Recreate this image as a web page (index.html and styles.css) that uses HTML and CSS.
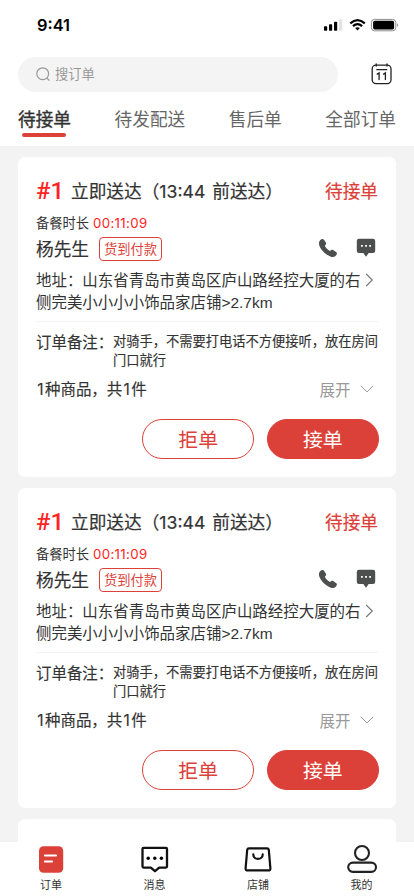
FILE: index.html
```html
<!DOCTYPE html>
<html lang="zh-CN">
<head>
<meta charset="utf-8">
<meta name="viewport" content="width=device-width, initial-scale=1">
<title>订单</title>
<link rel="stylesheet" href="styles.css">
</head>
<body>
<svg class="sprite" width="0" height="0" aria-hidden="true">
  <symbol id="phone" viewBox="0 0 20 20"><path d="M2.1 2.2 C3.2 .9 4.8 .5 5.8 1.5 L8 4.8 C8.5 5.8 7.9 6.6 6.8 7.8 C7.7 9.8 9.9 12 12 13.1 C13.3 11.8 14.1 11.4 15.1 12 L18.4 14.3 C19.4 15.3 18.8 16.8 17.5 18 C16.2 19.2 14.2 19.1 12.3 18.4 C7.4 16.5 3.1 12.2 1.3 7.5 C.6 5.4 .9 3.6 2.1 2.2Z" fill="#4d4f4f"/></symbol>
  <symbol id="chat" viewBox="0 0 20 20"><path d="M3 .8H17Q19.2 .8 19.2 3V12.8Q19.2 15 17 15H12.7L10 18.8L7.3 15H3Q.8 15 .8 12.8V3Q.8 .8 3 .8Z" fill="#4d4f4f"/><path d="M5 7h1.8v1.8H5zM9.1 7h1.8v1.8H9.1zM13.2 7H15v1.8h-1.8z" fill="#fff"/></symbol>
</svg>
<div class="screen">
  <header class="top">
    <div class="status">
      <span class="clock">9:41</span>
      <svg class="signals" width="76" height="14" viewBox="0 0 76 14">
        <g><rect x="0" y="8.2" width="3.2" height="4.6" rx=".8"/><rect x="5" y="6.2" width="3.2" height="6.6" rx=".8"/><rect x="10" y="3.8" width="3.2" height="9" rx=".8"/><rect x="15" y="1.6" width="3.2" height="11.2" rx=".8" fill="#e2e2e2"/></g>
        <g fill="none" stroke="#000" stroke-width="2.3"><path d="M26.3 5.4Q33.5 -1.2 40.8 5.4"/><path d="M29 8.2Q33.5 4.1 38.1 8.2"/></g><path d="M31.2 10.1Q33.5 8.3 35.9 10.1L33.5 12.5Z"/>
        <rect x="47.4" y="1.4" width="24.4" height="11.4" rx="3.2" fill="none" stroke="#8c8c8c"/><rect x="49.1" y="2.8" width="21" height="8.6" rx="1.6"/><path d="M73 5.2Q75.4 7.1 73 9Z" fill="#999"/>
      </svg>
    </div>
    <div class="searchbar">
      <div class="search">
        <svg width="15" height="15" viewBox="0 0 15 15" fill="none" stroke="#999" stroke-width="1.2"><circle cx="6.7" cy="6.7" r="5.9"/><path d="M10.9 11L13.4 13.6"/></svg>
        <span>搜订单</span>
      </div>
      <svg class="calendar" width="22" height="22" viewBox="0 0 22 22" fill="none" stroke="#222" stroke-width="1.3" stroke-linecap="round"><rect x="1.2" y="2.2" width="18.8" height="18.4" rx="3.8"/><path d="M5.2 1V3M16 1V3M5.8 6.6H15.8M6.2 11.1L8.1 10V16.6M12.5 11.1L14.4 10V16.6"/></svg>
    </div>
    <nav class="tabs">
      <span class="tab active">待接单</span><span class="tab">待发配送</span><span class="tab">售后单</span><span class="tab">全部订单</span>
    </nav>
  </header>
  <main class="orders">
    <article class="card">
      <div class="title"><b class="num">#1</b><span class="when">立即送达（<i class="time">13:44</i>前送达）</span><span class="state">待接单</span></div>
      <div class="prep">备餐时长<span class="timer">00:11:09</span></div>
      <div class="customer"><span class="name">杨先生</span><span class="tag">货到付款</span><svg class="phone" width="20" height="20"><use href="#phone"/></svg><svg width="20" height="20"><use href="#chat"/></svg></div>
      <div class="address"><p>地址：山东省青岛市黄岛区庐山路经控大厦的右侧完美小小小小饰品家店铺&gt;2.7km</p><svg width="9" height="14" viewBox="0 0 9 14" fill="none" stroke="#777" stroke-width="1.1"><path d="M1.2 1L7.3 7L1.2 13"/></svg></div>
      <div class="remark"><span class="label">订单备注：</span><p>对骑手，不需要打电话不方便接听，放在房间门口就行</p></div>
      <div class="summary"><span class="goods"><i>1</i>种商品，共<i>1</i>件</span><span class="expand">展开<svg width="14" height="8" viewBox="0 0 14 8" fill="none" stroke="#999"><path d="M.8 .8L7 6.9L13.2 .8"/></svg></span></div>
      <div class="actions"><button class="reject">拒单</button><button class="accept">接单</button></div>
    </article>
    <article class="card">
      <div class="title"><b class="num">#1</b><span class="when">立即送达（<i class="time">13:44</i>前送达）</span><span class="state">待接单</span></div>
      <div class="prep">备餐时长<span class="timer">00:11:09</span></div>
      <div class="customer"><span class="name">杨先生</span><span class="tag">货到付款</span><svg class="phone" width="20" height="20"><use href="#phone"/></svg><svg width="20" height="20"><use href="#chat"/></svg></div>
      <div class="address"><p>地址：山东省青岛市黄岛区庐山路经控大厦的右侧完美小小小小饰品家店铺&gt;2.7km</p><svg width="9" height="14" viewBox="0 0 9 14" fill="none" stroke="#777" stroke-width="1.1"><path d="M1.2 1L7.3 7L1.2 13"/></svg></div>
      <div class="remark"><span class="label">订单备注：</span><p>对骑手，不需要打电话不方便接听，放在房间门口就行</p></div>
      <div class="summary"><span class="goods"><i>1</i>种商品，共<i>1</i>件</span><span class="expand">展开<svg width="14" height="8" viewBox="0 0 14 8" fill="none" stroke="#999"><path d="M.8 .8L7 6.9L13.2 .8"/></svg></span></div>
      <div class="actions"><button class="reject">拒单</button><button class="accept">接单</button></div>
    </article>
    <article class="card"></article>
  </main>
  <footer class="navbar">
    <a class="item"><svg width="32" height="32" viewBox="0 0 32 32"><rect x="4" y="5.3" width="24.2" height="26.5" rx="4.5" fill="#dc4139"/><path d="M10 14.5H21M10 20.5H17" stroke="#fff" stroke-width="2.2" stroke-linecap="round"/></svg><span>订单</span></a>
    <a class="item"><svg width="32" height="32" viewBox="0 0 32 32"><path d="M4.5 6.9H27Q28 6.9 28 7.9V25.6Q28 26.6 27 26.6H20.2L16 30.2L11.8 26.6H4.5Q3.5 26.6 3.5 25.6V7.9Q3.5 6.9 4.5 6.9Z" fill="none" stroke="#111" stroke-width="2.3" stroke-linejoin="round"/><circle cx="9.2" cy="17.2" r="1.7"/><circle cx="15.8" cy="17.2" r="1.7"/><circle cx="22.4" cy="17.2" r="1.7"/></svg><span>消息</span></a>
    <a class="item"><svg width="32" height="32" viewBox="0 0 32 32" fill="none" stroke="#111" stroke-width="2.2" stroke-linejoin="round"><path d="M7 7.3H25Q26.6 7.3 26.8 8.8L28.4 27.4Q28.5 29.4 26.5 29.4H5.5Q3.5 29.4 3.6 27.4L5.2 8.8Q5.4 7.3 7 7.3Z"/><path d="M11.3 13.4C11.3 19.4 20.7 19.4 20.7 13.4" stroke-linecap="round"/></svg><span>店铺</span></a>
    <a class="item"><svg width="32" height="32" viewBox="0 0 32 32" fill="none" stroke="#222" stroke-width="2.1"><circle cx="16" cy="12" r="7"/><rect x="2.2" y="21.6" width="27.8" height="9.3" rx="4.6"/></svg><span>我的</span></a>
  </footer>
</div>
</body>
</html>
```

FILE: styles.css
```css
* { box-sizing: border-box; margin: 0; padding: 0; }
body { font-family: "Noto Sans CJK SC", sans-serif; color: #333; background: #f3f3f3; }
i { font-style: normal; }
svg { flex: none; display: block; }
.sprite { position: absolute; }
.screen { width: 414px; height: 896px; display: flex; flex-direction: column; overflow: hidden; }

.top { height: 146px; background: #fff; flex: none; }
.status { height: 56px; padding: 12px 14px 0 37px; display: flex; justify-content: space-between; }
.clock { font: 600 16.4px/26px Inter, sans-serif; color: #000; }
.signals { margin-top: 6px; }
.searchbar { height: 36px; padding: 0 21px 0 18px; display: flex; align-items: center; justify-content: space-between; }
.search { width: 320px; height: 35px; border-radius: 18px; background: #f4f4f4; padding-left: 18px; display: flex; align-items: center; gap: 4px; font-size: 13.25px; color: #999; }
.search span { margin-top: -1px; }
.tabs { padding: 13px 18px 0; display: flex; justify-content: space-between; }
.tab { font-size: 17.66px; line-height: 28px; color: #666; }
.tab.active { color: #333; -webkit-text-stroke: .35px #333; }
.tab.active::after { content: ""; display: block; width: 44px; height: 3.5px; margin: 0 auto; border-radius: 2px; background: #dc4139; }

.orders { flex: 1; min-height: 0; overflow: hidden; padding: 11px 18px 0; display: flex; flex-direction: column; gap: 11px; }
.card { flex: none; height: 320px; border-radius: 7px; background: #fff; padding: 18px 18px 0; }
.title { height: 30px; display: flex; align-items: center; font-size: 17.66px; white-space: nowrap; }
.num { width: 35px; padding-top: 2px; font: 500 24px/30px Roboto, sans-serif; color: #ff2424; }
.when { -webkit-text-stroke: .2px #333; }
.time { display: inline-block; width: 53px; font-family: Inter, sans-serif; }
.state { margin-left: auto; color: #dc4139; -webkit-text-stroke: .2px #dc4139; }
.prep { height: 20px; margin-top: 8px; font-size: 13.25px; line-height: 20px; }
.timer { margin-left: 4px; font: 13.25px/20px Inter, sans-serif; letter-spacing: .35px; color: #ff2424; }
.customer { height: 26px; margin-top: 3px; display: flex; align-items: center; }
.name { width: 63px; font-size: 17.66px; line-height: 26px; -webkit-text-stroke: .2px #333; }
.tag { height: 24px; width: 63px; border: 1px solid #dc4139; border-radius: 4px; font-size: 13.25px; line-height: 22px; text-align: center; color: #dc4139; }
.customer svg { margin: 0 2px 2px 0; }
.customer .phone { margin: 0 18px 2px auto; }
.address { margin-top: 8px; height: 52px; border-bottom: 1px solid #f3f3f3; display: flex; }
.address p { width: 329px; font: 15.46px/22px "Liberation Sans", "Noto Sans CJK SC", sans-serif; }
.address svg { margin-top: 3px; }
.remark { margin-top: 10px; display: flex; }
.label { flex: none; width: 77px; font-size: 15.46px; line-height: 19px; white-space: nowrap; }
.remark p { width: 267px; font-size: 13.25px; line-height: 18.6px; }
.label, .remark p, .goods { -webkit-text-stroke: .15px #333; }
.summary { height: 24px; margin-top: 8px; padding-right: 4.5px; display: flex; align-items: center; justify-content: space-between; font-size: 15.46px; line-height: 24px; }
.goods i { display: inline-block; width: 9px; text-align: center; font-family: Inter, sans-serif; }
.expand { display: flex; align-items: center; gap: 9px; color: #999; }
.actions { margin: 18px -.6px 0 0; display: flex; justify-content: flex-end; gap: 13px; }
.actions button { width: 111.6px; height: 40px; border: 1px solid #dc4139; border-radius: 20px; background: #fff; font: 19.87px/36px "Noto Sans CJK SC", sans-serif; color: #dc4139; }
.actions .accept { background: #dc4139; color: #fff; }

.navbar { height: 54px; flex: none; background: #fff; display: flex; }
.item { flex: 1; padding-right: 1.5px; display: flex; flex-direction: column; align-items: center; font-size: 11px; line-height: 16px; }
.item svg { margin-top: -1px; }
.item span { margin-top: 3px; }
```
